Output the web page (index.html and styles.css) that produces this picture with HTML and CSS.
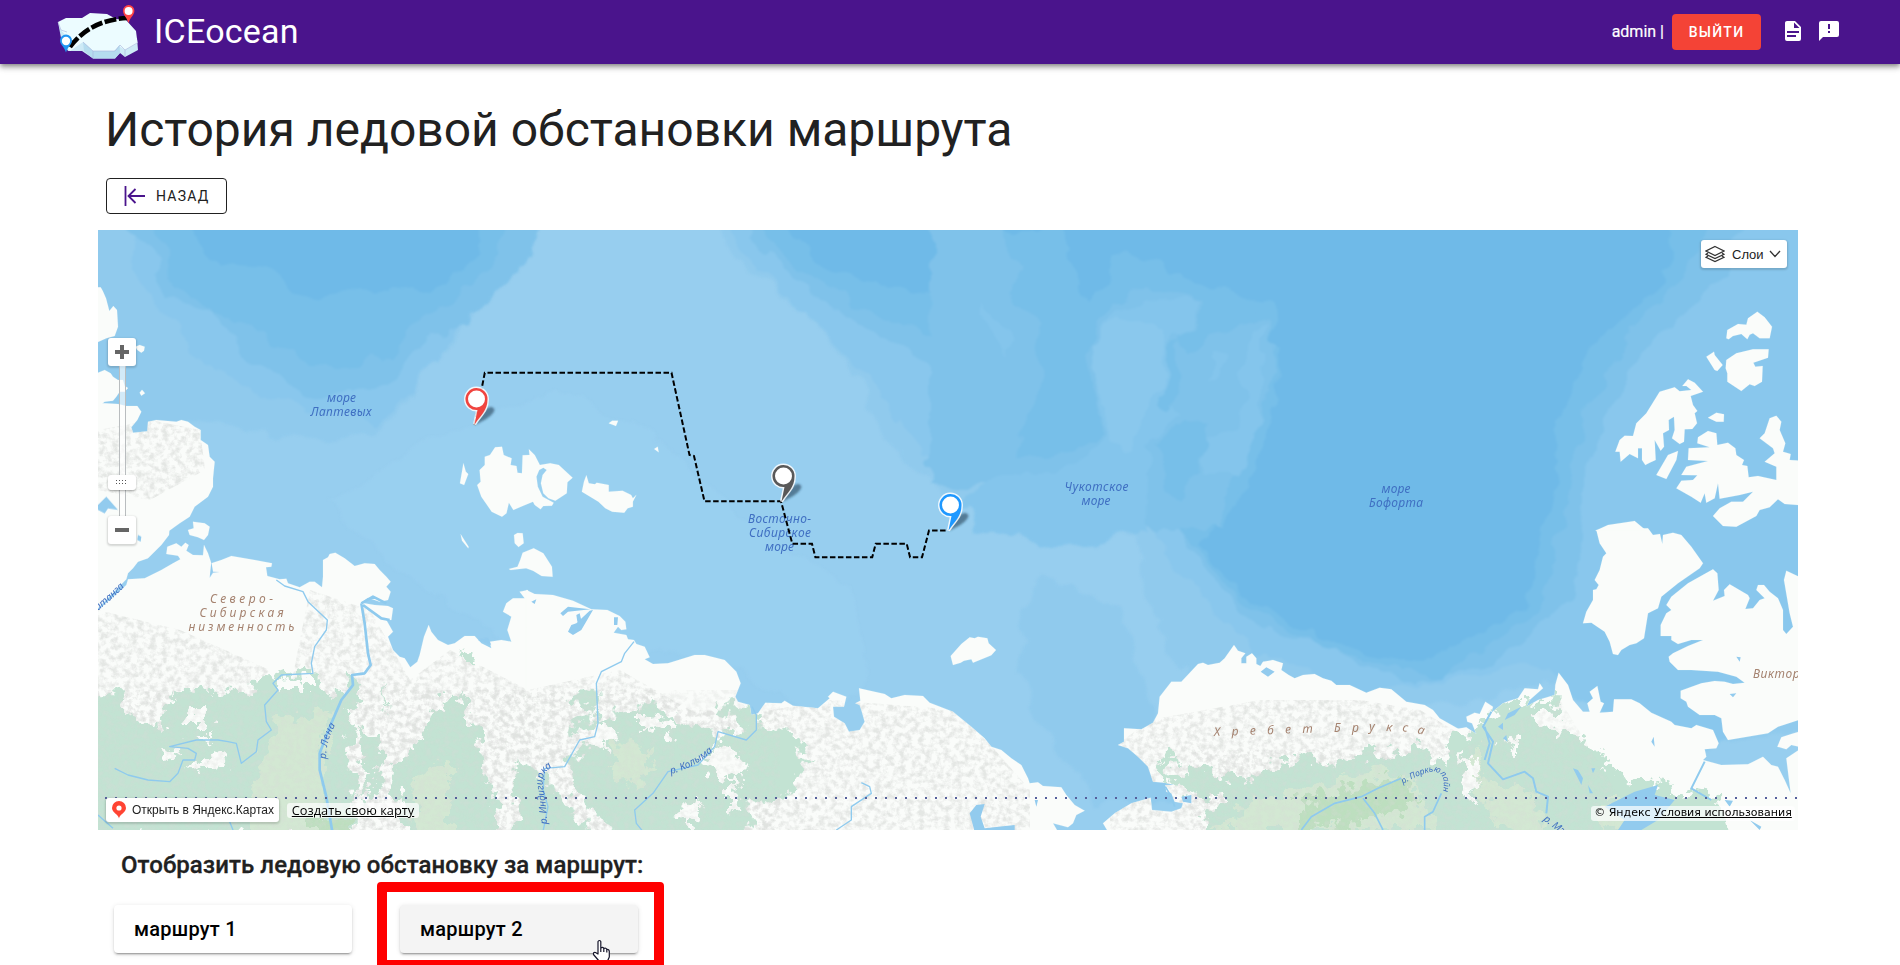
FILE: index.html
```html
<!DOCTYPE html>
<html lang="ru">
<head>
<meta charset="utf-8">
<title>ICEocean</title>
<link rel="stylesheet" href="styles.css">
</head>
<body>
<header class="bar">
  <svg class="logo" width="82" height="58" viewBox="57 3 82 58">
    <path fill="#cdeaf6" d="M58 22 61 38 68 51 82 51 93 58.500 115 58.500 120 53 125 57 138 50 137 38z"/>
    <path fill="#ecfcff" d="M58 22 66 18 82 18 90 13 107 14 116 19 126 20 136 31 137.500 43 125 50 119 46 114 51 93 51 83 42 70 51 64 45 66 36 61 30z"/>
    <path fill="#b5dcef" d="M83 42 93 51 93 58.500 84 51zM93 51H115V58.500H93zM115 51 119.500 45 120 53 115 58.500z"/>
    <path fill="none" stroke="#aab4dc" stroke-width=".6" d="M58 22 61 30 67 32M83 42 93 51H115L120 45 125 50 137 43M93 51V58M125 50V57"/>
    <path fill="none" stroke="#000" stroke-width="4.600" stroke-dasharray="12 2.500" d="M70 47Q90 20 127 18"/>
    <path fill="#2196f3" d="M66 52.500C64 46 60 45 60 40.500a6 6 0 0 1 12 0C72 45 68 46 66 52.500z"/><circle cx="66" cy="41" r="4.200" fill="#fff"/>
    <path fill="#f44" d="M128.500 23C126.500 17 123 15 123 10.800a5.700 5.700 0 0 1 11.400 0C134.400 15 130.500 17 128.500 23z"/><circle cx="128.600" cy="11" r="4" fill="#fff"/>
  </svg>
  <span class="brand">ICEocean</span>
  <span class="user">admin |</span>
  <button class="exit">выйти</button>
  <svg class="ico doc" width="24" height="24" viewBox="0 0 24 24"><path fill="#fff" d="M13 9h5.500L13 3.500V9M6 2h8l6 6v12a2 2 0 0 1-2 2H6a2 2 0 0 1-2-2V4c0-1.110.890-2 2-2m9 16v-2H6v2h9m3-4v-2H6v2h12z"/></svg>
  <svg class="ico" width="24" height="24" viewBox="0 0 24 24"><path fill="#fff" d="M13 10h-2V5h2m0 9h-2v-2h2m7-10H4a2 2 0 0 0-2 2v18l4-4h14a2 2 0 0 0 2-2V4a2 2 0 0 0-2-2z"/></svg>
</header>
<main class="page">
  <h1 class="title">История ледовой обстановки маршрута</h1>
  <button class="back">
    <svg width="22" height="20" viewBox="0 0 22 20" fill="none" stroke="#4a148c" stroke-width="1.800"><path d="M1.500 0V20M21 10H4.500M11.500 3 4.500 10 11.500 17"/></svg>
    <span>назад</span>
  </button>
  <section class="map">
    <svg class="chart" width="1700" height="600" viewBox="98 230 1700 600">
      <defs>
        <filter id="soft" x="-5%" y="-5%" width="110%" height="110%" color-interpolation-filters="sRGB"><feTurbulence type="fractalNoise" baseFrequency=".03" numOctaves="3" seed="4"/><feDisplacementMap in="SourceGraphic" scale="26" xChannelSelector="R" yChannelSelector="G" result="d"/><feGaussianBlur in="d" stdDeviation="1"/></filter>
        <filter id="rough" filterUnits="userSpaceOnUse" x="90" y="500" width="1720" height="350" color-interpolation-filters="sRGB"><feTurbulence type="fractalNoise" baseFrequency=".08" numOctaves="4" seed="9"/><feDisplacementMap in="SourceGraphic" scale="30" xChannelSelector="R" yChannelSelector="G"/></filter>
        <filter id="relief" filterUnits="userSpaceOnUse" x="90" y="220" width="1720" height="630" color-interpolation-filters="sRGB"><feTurbulence type="fractalNoise" baseFrequency=".16 .18" numOctaves="4" seed="3"/><feColorMatrix values="0 0 0 0 .84  0 0 0 0 .85  0 0 0 0 .84  3 0 0 0 -1.200"/><feComposite in2="SourceAlpha" operator="in"/></filter>
        <filter id="blur"><feGaussianBlur stdDeviation="1.200"/></filter>
        <clipPath id="landclip"><use href="#s1"/><use href="#s2"/><use href="#s3"/><use href="#s4"/><use href="#s5"/></clipPath>
        <path id="s1" transform="translate(98 230) scale(.33333)" d="M-5 520 20 520 60 522 85 528 118 528 130 545 118 570 100 592 105 608 148 604 150 575 175 570 235 575 250 570 270 575 290 590 308 600 308 630 330 645 335 680 350 695 345 745 345 770 330 800 290 830 275 860 245 880 214 902 213 915 190 945 150 985 120 995 105 1015 90 1030 85 1048 -5 1140Z"/>
        <path id="s2" transform="translate(98 530) scale(.33333)" d="M-5 245 85 165 90 148 140 145 190 120 225 100 247 88 240 77 205 72 208 50 235 40 250 50 262 38 272 45 265 62 285 75 315 76 318 45 330 70 340 100 370 90 400 78 470 90 522 100 520 110 504 112 508 138 545 148 565 146 570 160 605 172 635 155 650 155 672 172 675 140 675 90 690 82 695 72 712 68 740 85 770 108 800 100 830 102 845 120 865 140 878 155 865 170 878 185 870 210 845 215 810 203 790 218 830 225 870 228 885 235 880 270 865 270 885 305 870 320 885 360 905 380 920 385 937 412 958 395 965 375 978 320 992 285 1000 305 1020 330 1050 345 1070 340 1100 318 1130 318 1150 340 1180 355 1175 335 1210 330 1240 335 1228 300 1240 260 1215 245 1225 220 1245 205 1280 205 1265 185 1290 180V905H-5Z"/>
        <path id="s3" transform="translate(528 530) scale(.33333)" d="M-5 180 20 192 75 195 135 212 190 238 238 240 275 258 292 275 295 298 280 300 270 290 257 308 295 315 300 328 318 330 325 342 350 350 365 382 350 388 375 402 420 400 500 375 530 375 590 390 625 425 638 460 622 500 630 515 665 525 670 555 690 550 712 518 760 520 770 512 795 527 870 535 905 505 900 500 915 485 955 500 948 530 915 530 918 560 950 580 963 605 995 600 1010 575 1000 540 995 525 982 520 997 512 993 475 1070 492 1090 505 1130 495 1185 498 1205 518 1275 545 1330 590 1370 625 1390 650 1420 660 1450 685 1480 705 1500 745 1505 760 1530 757 1545 768 1600 772 1615 795 1640 825 1670 842 1645 855 1635 880 1620 892 1575 880 1590 905H-5Z"/>
        <path id="s4" transform="translate(1028 530) scale(.33333)" d="M225 880 260 850 310 820 368 803 372 840 430 845 460 835 465 820 440 815 430 790 415 785 412 765 440 765 410 758 375 755 360 710 330 680 300 655 270 645 288 635 288 595 340 598 375 578 390 550 395 500 430 455 460 455 510 402 525 398 540 405 575 398 590 385 618 345 630 362 652 370 640 385 640 400 655 400 655 380 672 370 685 385 685 402 697 408 705 395 735 390 765 400 760 420 782 435 800 445 825 435 860 432 885 445 910 452 925 465 965 465 1015 488 1055 473 1090 478 1135 515 1190 525 1215 540 1235 565 1292 597V905H240Z"/>
        <path id="s5" transform="translate(1458 530) scale(.33333)" d="M-5 597 25 592 55 612 42 580 28 575 25 560 50 548 65 552 82 515 105 530 100 548 135 520 155 512 180 505 200 475 240 478 245 460 255 475 215 510 205 530 240 510 290 495 292 465 302 428 330 465 345 510 375 545 395 545 388 520 405 505 395 485 418 468 428 515 438 520 425 548 465 545 468 508 520 508 545 520 580 548 640 575 650 585 700 595 715 585 765 600 782 640 775 655 740 658 745 680 735 690 790 705 870 703 915 680 940 705 960 710 980 750 998 790 985 685 1022 660V905H-5Z"/>
      </defs>
      <rect x="98" y="230" width="1700" height="600" fill="#97ceef"/>
      <g filter="url(#soft)">
        <g transform="translate(98 230) scale(1.0909 .3827)">
          <path fill="#90caed" d="M-20-60H420L370 100 310 330 260 520 220 560 100 500-20 560ZM540-60 640 200 700 400 720 560 800 740 950 800 980 1100 1040 1250 1250 1240 1340 1180 1500 1350 1580 1300V-60ZM860 900 840 1150 910 1500 990 1500 940 1000Z"/>
          <path fill="#89c7ed" d="M40-60H400L350 100 310 330 260 500 160 450 80 320 30 100ZM560-60 650 230 720 430 760 600 830 690 960 750 985 880 1060 1090 1160 1210 1310 1130 1400 1300 1480 1350 1580 1200V-60Z"/>
          <path fill="#7fc2ea" d="M580-60 650 160 710 260 770 360 790 500 850 610 980 650 1000 830 1060 1030 1200 1180 1280 1130 1350 970 1370 600 1410 330 1490 130 1510-60Z"/>
          <path fill="#77bfe9" d="M590-60 650 130 720 240 800 300 830 500 850 600 960 640 1005 820 1050 970 1120 1100 1230 1160 1320 1000 1345 750 1360 500 1400 280 1450 130 1490-60Z"/>
          <path fill="#6fbae8" d="M620-60 660 100 760 170 870 230 900 250 940 100 1010 130 1075 190 1080 430 1060 650 1010 820 1050 950 1130 1090 1220 1130 1310 980 1330 730 1340 500 1380 280 1440 130 1440-60Z"/>
        </g>
        <g transform="translate(98 230) scale(.33333)">
          <path fill="#7fc2ea" d="M60-30 180 100 200 200 330 245 410 320 440 370 520 430 640 490 780 490 850 450 920 410 1000 310 1100 290 1200 180 1290 100 1330-30Z"/>
          <path fill="#77bfe9" d="M160-40 230 150 330 240 450 280 560 340 630 400 720 415 790 410 820 380 880 390 950 290 1050 240 1110 160 1180 110 1240-40Z"/>
          <path fill="#6fbae8" d="M260-30 330 90 400 100 500 108 600 185 650 218 700 190 760 165 900 190 1000 180 1130 90 1150-30Z"/>
        </g>
        <g transform="translate(980 230) scale(.33333)">
          <path fill="#77bfe9" d="M-100 0H250L260 80 340 200 380 180 400 90 460 60 540 100 590 175 715 160 680 220 690 290 830 240 895 350 890 440 850 560 780 780 720 900 560 900 280 720-100 640Z"/>
          <path fill="#7fc2ea" d="M-150-30 60-30 120 100 80 200 180 290 200 440 150 540 110 690 280 660 380 620 350 520 300 380 360 270 430 210 520 170 665 215 650 290 600 300 640 390 690 340 760 290 850 270 885 330 880 440 840 560 760 760 710 900 520 900 400 800-150 760Z"/>
          <path fill="#84c5ec" d="M330 340 420 240 520 205 660 215 640 290 580 300 550 500 600 550 500 660 500 900 300 950-30 900-60 810 60 750 280 700 390 620 350 500ZM830 300 850 280 850 450 830 600 780 740 660 740 670 630 760 600 810 500 780 420ZM0 220 60 260 110 330 70 380 40 330ZM690 390 740 370 715 450 690 460Z"/>
          <path fill="#8ac8ed" d="M325 340 420 265 540 300 560 350 540 480 480 570 460 660 400 640 380 540 340 460Z"/>
          <path fill="#77bfe9" d="M575 360 605 310 600 460 560 545 535 540ZM530 640 620 560 680 580 660 700 620 800 570 780Z"/>
        </g>
        <path fill="#9bd1f1" opacity=".5" d="M450 430 560 390 650 430 690 470 740 520 850 590 870 680 820 720 720 660 500 640 380 560 330 500Z"/>
      </g>
      <g fill="#fafcfa" stroke="#fafcfa" stroke-width=".5">
        <use href="#s1"/><use href="#s2"/><use href="#s3"/><use href="#s4"/><use href="#s5"/>
        <g id="isles">
          <path transform="translate(98 230) scale(.33333)" d="M-5 172 8 172 14 182 24 205 34 243 46 228 57 240 60 290 50 318 25 325-5 338ZM112 350 125 345 140 350 138 362 130 368 118 360ZM-5 430 20 420 38 430 45 440 60 450 75 450 80 468 90 474 80 485 65 485 55 500 45 512 20 515-5 535ZM125 488 132 479 141 490 130 497ZM285 875 320 880 335 890 330 915 318 930 300 922 275 915 270 900 287 895Z"/>
          <path transform="translate(440 350) scale(.3444 .33333)" d="M130 320 145 315 160 292 180 290 185 315 208 325 205 345 222 348 225 368 238 370 240 316 260 315 258 298 275 315 290 345 320 340 345 345 385 383 370 397 368 430 335 452 315 445 300 430 293 400 298 375 310 360 300 353 288 360 280 380 284 410 298 440 330 458 325 467 300 468 292 478 275 465 270 455 240 468 213 480 200 458 193 490 180 500 150 485 120 440 108 405 118 395 115 360 130 345ZM68 340 75 365 82 372 70 405 58 400ZM412 425 418 395 425 376 432 400 450 403 455 398 490 405 490 425 530 422 555 435 560 445 570 435 560 455 560 470 545 475 535 488 500 485 480 475 460 455ZM490 220 500 212 517 212 511 228ZM622 297 632 290 635 307ZM215 555 225 549 240 550 243 580 228 591 217 580ZM200 657 225 650 233 630 240 608 272 595 300 610 325 650 327 680 295 678 270 662 250 655 205 660ZM60 553 83 590 82 595 64 572Z"/>
          <path transform="translate(528 530) scale(.33333)" d="M1268 378 1300 342 1325 322 1340 325 1350 320 1378 325 1382 340 1404 360 1390 376 1335 398 1330 388 1308 392 1298 398 1275 405Z"/>
          <path transform="translate(1458 530) scale(.33333)" d="M415 0 425 40 445 70 435 80 425 120 410 150 422 165 415 178 405 180 405 210 385 245 375 280 400 278 440 305 455 335 465 372 480 375 490 360 515 345 535 340 558 325 570 250 600 235 610 200 660 160 725 115 735 100 700 50 670 15 645 8 615 15 613 42 606 12 585 15 570-5ZM765 118 778 130 782 180 765 212 800 198 798 180 815 163 870 195 875 205 862 237 885 235 905 210 920 205 895 180 900 165 918 165 935 185 960 205 975 240 975 300 985 312 1005 290 995 250 978 150 985 122 1022 140V570L960 590 930 610 810 630 795 605 790 565 770 555 725 555 690 530 685 515 668 505 668 482 730 460 770 453 800 455 825 462 860 458 835 440 780 425 700 420 660 420 635 395 632 380 645 370 690 348 735 330 700 330 660 342 640 330 640 318 608 318 608 285 625 250 640 240 625 225 640 200 690 160ZM1022 605 1000 612 970 622 958 650 985 658 1000 645 1022 650Z"/>
          <path transform="translate(1458 230) scale(.33333)" d="M805 325 808 300 840 282 865 284 870 265 898 245 920 262 942 290 935 325 905 325 885 310 875 314 868 328 850 312 825 318 812 328ZM745 380 768 365 770 375 794 405 778 423 770 420ZM805 390 835 370 885 358 932 358 930 383 886 398 892 410 914 408 912 455 890 468 875 463 850 483 808 455 808 430 803 415ZM472 665 485 630 500 617 525 618 535 580 565 550 605 485 650 472 665 484 700 480 685 468 673 468 690 448 710 458 735 485 698 498 705 525 718 543 710 550 717 580 703 597 680 598 678 635 665 642 642 625 650 600 648 560 632 570 633 600 615 610 618 650 608 662 590 630 593 690 575 698 562 705 552 690 552 655 540 655 540 685 515 672 488 695 485 665ZM595 735 630 675 660 663 655 690 625 747ZM750 563 775 548 798 553 797 575 775 575ZM655 775 670 752 705 750 718 736 670 735 685 710 750 693 690 690 692 655 755 652 718 640 720 622 750 603 775 610 778 645 810 638 832 655 835 675 858 690 852 705 868 708 872 742 900 738 955 750 955 710 920 695 950 670 945 655 905 625 920 610 935 565 955 557 970 575 965 600 982 640 975 665 998 672 995 690 1022 692V825L980 822 960 808 935 832 905 840 895 858 835 890 795 888 765 858 785 835 820 815 855 815 885 785 845 795 785 806 780 760 770 805 745 818 740 790 728 818 700 800ZM412 902 450 885 530 873 565 902Z"/>
        </g>
      </g>
      <g clip-path="url(#landclip)">
        <g filter="url(#relief)" opacity=".6">
          <path d="M98 430 150 420 200 430 205 470 150 500 98 490ZM98 610 180 630 270 670 250 690 98 690ZM310 590 370 610 410 680 450 650 528 690 620 670 690 710 760 712 830 700 960 710 1030 790V830H98V690L290 690ZM1110 750 1150 720 1260 700 1360 700 1420 710 1470 740V830H1110ZM1470 730 1500 830H1458V740Z"/>
        </g>
        <g filter="url(#rough)">
          <g fill="#c3e3d3">
            <path transform="translate(98 530) scale(.33333)" d="M-40 490 60 490 80 560 180 590 230 500 300 460 340 485 460 485 490 450 540 430 650 410 650 460 680 485 740 485 745 425 780 450 790 510 750 540 770 600 740 680 770 720 770 900-40 940ZM880 720 920 690 970 620 1020 530 1080 485 1120 560 1150 640 1160 740 1200 810 1180 930 930 930 900 800ZM1090 360 1130 370 1125 410ZM790 590 850 640 850 720 830 790 780 820 830 720 780 690ZM860 430 860 520 880 550 850 520Z"/>
            <path transform="translate(528 530) scale(.33333)" d="M110 500 210 490 210 560 280 550 380 520 460 580 500 590 560 610 640 610 690 580 750 600 810 620 820 680 870 690 820 710 810 760 730 830 650 800 680 940 300 940 160 820 110 700 210 620 210 580 120 620 110 590 210 560ZM580 520 660 525 690 550 670 600 640 570 590 570ZM-40 700 60 740 90 800 190 900 180 940-40 940Z"/>
            <path transform="translate(1028 530) scale(.33333)" d="M400 690 430 670 460 690 415 700 420 740 520 720 640 750 700 720 850 680 880 710 920 690 1000 680 1020 640 1060 680 1150 650 1200 660 1220 690 1340 700V940H510L530 850 600 830 590 790 490 800 440 760 390 740Z"/>
            <path transform="translate(1458 530) scale(.33333)" d="M-40 690-20 620 60 600 80 560 180 510 320 515 320 545 230 550 250 600 370 610 430 670 480 740 630 760 640 800 740 780 800 850 810 940H-40Z"/>
          </g>
          <path fill="#d3e8d3" d="M280 720 330 710 325 760 320 840 250 840 250 790ZM410 780 450 760 450 840 420 840ZM610 740 650 750 640 790 620 780ZM1210 830 1260 800 1380 770 1410 780 1440 830ZM1480 740 1480 780 1530 790 1550 840 1500 830 1470 770ZM1600 800 1630 800 1630 830 1600 830Z"/>
          <path fill="#bddfbf" d="M1300 800 1360 785 1400 775 1420 800 1380 820 1300 830ZM310 815 350 815 350 840 310 840Z"/>
          <path fill="#fafcfa" d="M190 710 205 710 210 725 185 725ZM190 735 215 735 195 745ZM160 745 180 750 170 765ZM185 770 225 750 230 760 205 775ZM285 675 310 678 310 690 280 690ZM640 715 680 725 670 735 640 725ZM590 740 600 720 620 740 605 750ZM700 760 725 740 750 770 720 780ZM675 810 700 800 690 830ZM730 770 740 800 730 820ZM1505 740 1515 735 1515 755ZM1462 750 1478 765 1475 810 1465 790Z"/>
        </g>
        <path filter="url(#relief)" opacity=".3" d="M98 690H780L780 830H98ZM1190 750H1460L1560 700 1640 830H1190Z"/>
      </g>
      <g fill="#92cbee">
        <path transform="translate(98 530) scale(.33333)" d="M340 95 345 125 365 125 345 128 335 143ZM1140 330 1170 322 1180 345ZM0-75 25-100 60-60 30-65 20-50 0-60ZM120 15 130 20 128 35 118 30Z"/>
        <path transform="translate(528 530) scale(.33333)" d="M97 250 120 230 187 238 120 245 105 258ZM185 242 195 240 160 300 135 315 120 305 130 285 145 280ZM145 255 155 250 162 280 148 275ZM258 262 270 262 268 285 258 285ZM10 215 25 208 20 222ZM1325 850 1345 825 1370 822 1358 860 1370 895 1460 885 1460 905H1340Z"/>
        <path transform="translate(1028 530) scale(.33333)" d="M698 425 715 412 740 425 720 440ZM460 800 490 795 490 820 465 815ZM20 810 30 810 25 830Z"/>
        <path transform="translate(1458 530) scale(.33333)" d="M120 590 135 578 135 600ZM150 550 190 530 170 555 140 570ZM345 715 360 720 375 745 370 765ZM400 715 412 715 405 730ZM390 765 405 790 395 790ZM580 635 587 620 590 650ZM440 830 530 785 600 765 590 795 650 810 600 870 550 900H480L500 870ZM815 492 835 490 825 502ZM835 380 848 382 845 395ZM135 625 145 615 148 635ZM800 810 825 812 815 830ZM875 870 910 890 905 900Z"/>
      </g>
      <g fill="none" stroke="#8ecaee" stroke-width="4" stroke-linejoin="round">
        <path transform="translate(98 530) scale(.33333)" d="M535 150 560 168 615 185 630 215 688 270 685 300 650 350 640 400 645 430 550 435 525 460 540 480 500 525 505 575 520 600 480 630 475 665 430 700 415 640 390 635 360 630 295 630 215 650 270 655 295 670 290 690 255 690 240 730 215 755 150 750 90 735 50 715M0 855 45 895M395 875 405 900"/>
        <path stroke-width="8" transform="translate(98 530) scale(.33333)" d="M790 220 800 280 810 370 818 405 800 430 762 435 765 465 730 510 700 580 665 670 665 720 685 800 703 905M790 220 825 200 865 220M795 225 850 265 875 270"/>
        <path transform="translate(528 530) scale(.33333)" d="M318 335 290 370 280 395 220 425 205 460 210 580 200 620 155 630 110 710 50 715 45 780 60 830 45 905M672 530 685 555 685 600 655 630 570 605 560 650 510 705 420 725 375 790 320 840 325 880 345 905M1000 758 1025 770 1030 790 970 830 970 870 925 900"/>
        <path stroke-width="5" transform="translate(1028 530) scale(.33333)" d="M820 900 850 860 920 820 1000 800 1050 775 1120 745M1005 805 1040 850 1065 900M1240 790 1215 845 1190 860 1190 900M412 770 430 800 440 830"/>
        <path stroke-width="6" transform="translate(1458 530) scale(.33333)" d="M100 545 75 590 105 635 90 700 135 748 200 725 225 745 235 785 270 800 265 850M80 590 95 640 80 690M740 695 715 745 700 775 760 810"/>
      </g>
      <path fill="none" stroke="#565f9c" stroke-width="2" stroke-dasharray="2 8" d="M105 798H1798"/>
      <g class="sea" text-anchor="middle">
        <text x="341.500" y="401.500" textLength="29">море</text><text x="341" y="415.500" textLength="61">Лаптевых</text>
        <text x="779.500" y="522.500" textLength="63">Восточно-</text><text x="780" y="536.500" textLength="62">Сибирское</text><text x="779.500" y="550.500" textLength="29">море</text>
        <text x="1096.500" y="491" textLength="64">Чукотское</text><text x="1096" y="505" textLength="29">море</text>
        <text x="1396" y="493" textLength="29">море</text><text x="1396" y="507" textLength="54">Бофорта</text>
      </g>
      <g class="ridge">
        <text x="210" y="603" textLength="63">Северо-</text><text x="199.500" y="617" textLength="84">Сибирская</text><text x="188.500" y="631" textLength="106">низменность</text>
        <text x="1214" y="736" textLength="99" transform="rotate(-2 1214 736)">Хребет</text>
        <text y="732 732 731 731 731 733" x="1334 1352 1369 1386 1402 1417" rotate="0 0 0 5 10 15">Брукса</text>
        <text x="1753" y="678" textLength="54">Виктори</text>
      </g>
      <g class="river">
        <path id="r1" fill="none" d="M94 614Q112 600 130 581"/><text><textPath href="#r1">Хатанга</textPath></text>
        <path id="r2" fill="none" d="M326 759Q326 740 336 724"/><text><textPath href="#r2" textLength="36">р. Лена</textPath></text>
        <path id="r3" fill="none" d="M547 824Q546 800 543 785Q540 770 562 762"/><text><textPath href="#r3">р. Индигирка</textPath></text>
        <path id="r4" fill="none" d="M671 774Q695 768 718 747"/><text><textPath href="#r4">р. Колыма</textPath></text>
        <path id="r5" fill="none" d="M1403 784Q1424 771 1436 772Q1450 776 1439 806"/><text class="small"><textPath href="#r5">р. Поркьюпайн</textPath></text>
        <path id="r6" fill="none" d="M1543 820 1572 842"/><text><textPath href="#r6">р. Мэк</textPath></text>
      </g>
      <path fill="none" stroke="#000" stroke-width="2" stroke-dasharray="5.500 2.500" d="M474.500 425 484.800 372.700H671.500L689.500 455 694 456 704.500 501.300H781L792.300 543.700H812L815.400 557.300H872.200L875.700 543.700H906.700L910.100 557.300H922L929 530.500H948"/>
      <g id="pins">
        <g transform="translate(474.500 425)" fill="#f0443f"><path filter="url(#blur)" fill="#28465a" fill-opacity=".6" d="M0 0 10-15Q18-21 20-15Q18-8 0 0z"/><path stroke="#fff" stroke-opacity=".85" stroke-width="3" d="M0-.5 3-15A11 11 0 1 1 13-26C13-14 6-10 0-.5z"/><path d="M0-.5 3-15A11 11 0 1 1 13-26C13-14 6-10 0-.5z"/><circle cx="2" cy="-26" r="8.500" fill="#fff"/></g>
        <g transform="translate(781.500 502)" fill="#595959"><path filter="url(#blur)" fill="#28465a" fill-opacity=".6" d="M0 0 10-15Q18-21 20-15Q18-8 0 0z"/><path stroke="#fff" stroke-opacity=".85" stroke-width="3" d="M0-.5 3-15A11 11 0 1 1 13-26C13-14 6-10 0-.5z"/><path d="M0-.5 3-15A11 11 0 1 1 13-26C13-14 6-10 0-.5z"/><circle cx="2" cy="-26" r="8.500" fill="#fff"/></g>
        <g transform="translate(948.500 531)" fill="#1e98ff"><path filter="url(#blur)" fill="#28465a" fill-opacity=".6" d="M0 0 10-15Q18-21 20-15Q18-8 0 0z"/><path stroke="#fff" stroke-opacity=".85" stroke-width="3" d="M0-.5 3-15A11 11 0 1 1 13-26C13-14 6-10 0-.5z"/><path d="M0-.5 3-15A11 11 0 1 1 13-26C13-14 6-10 0-.5z"/><circle cx="2" cy="-26" r="8.500" fill="#fff"/></g>
      </g>
    </svg>
    <div class="zoom">
      <button class="zbtn"><svg width="14" height="14"><path fill="#666" d="M5 0h4v5h5v4H9v5H5V9H0V5h5z"/></svg></button>
      <div class="rail"><div class="runner"><svg width="12" height="5" fill="#555"><path d="M0 0h1v1H0zM3 0h1v1H3zM6 0h1v1H6zM9 0h1v1H9zM0 3h1v1H0zM3 3h1v1H3zM6 3h1v1H6zM9 3h1v1H9z"/></svg></div></div>
      <button class="zbtn"><svg width="14" height="14"><path fill="#666" d="M0 5h14v4H0z"/></svg></button>
    </div>
    <button class="layers">
      <svg width="20" height="18" viewBox="0 0 20 18" fill="none" stroke="#333" stroke-width="1.200"><path d="M10 1.500 19 6 10 10.500 1 6zM3 8 1 9.300 10 13.500 19 9.300 17 8M3 11 1 12.300 10 16.500 19 12.300 17 11"/></svg>
      <span>Слои</span>
      <svg width="12" height="8" viewBox="0 0 12 8" fill="none" stroke="#333" stroke-width="1.300"><path d="M1 1 6 6.500 11 1"/></svg>
    </button>
    <div class="open">
      <svg width="14" height="18" viewBox="0 0 14 18"><path fill="#f43" d="M7 17.500C6.500 13.500 0 11.500 0 7a7 7 0 0 1 14 0C14 11.500 7.500 13.500 7 17.500z"/><circle cx="7" cy="7" r="2.600" fill="#fff"/></svg>
      <span>Открыть в Яндекс.Картах</span>
    </div>
    <a class="create">Создать свою карту</a>
    <div class="copy">© Яндекс <a>Условия использования</a></div>
  </section>
  <h2 class="sub">Отобразить ледовую обстановку за маршрут:</h2>
  <div class="routes">
    <div class="card">маршрут 1</div>
    <div class="card hover">маршрут 2
      <svg class="cursor" width="19" height="26" viewBox="0 0 19 26"><path fill="#fff" stroke="#15152a" stroke-width="1.200" stroke-linejoin="round" d="M6 15V2.500Q7.500.5 8.800 2.500V9Q11 7.500 11.800 9.500 14 8.500 14.800 10.500 17 10 17.300 12.500V18L15.500 22V25H7V22L1.500 15.500Q1 13 3.500 13.500zM8.800 9V13M11.800 9.500V13M14.800 10.500V13.500"/></svg>
      <div class="frame"></div>
    </div>
  </div>
</main>
</body>
</html>
```
FILE: styles.css
```css
* { box-sizing: border-box; }
body { margin: 0; height: 965px; overflow: hidden; background: #fff; color: #212121; font-family: Roboto, "Liberation Sans", sans-serif; }
button { font: inherit; border: 0; padding: 0; }
svg { display: block; }
.bar { position: relative; display: flex; align-items: center; height: 64px; padding: 0 59px 0 57px; background: #4a148c; color: #fff; box-shadow: 0 2px 4px -1px rgba(0,0,0,.3), 0 4px 5px rgba(0,0,0,.2), 0 1px 10px rgba(0,0,0,.14); }
.brand { margin-left: 15px; font-size: 34px; line-height: 60px; letter-spacing: .25px; flex: 1; padding-bottom: 2px; }
.user { font-size: 16px; margin-right: 8px; padding-bottom: 1px; -webkit-text-stroke: .2px #fff; }
.exit { width: 89px; height: 36px; border-radius: 4px; background: #f44336; color: #fff; font-size: 14px; font-weight: 500; letter-spacing: 1.25px; text-transform: uppercase; margin-right: 20px; }
.ico { margin-top: -2px; }
.doc { margin-right: 12px; }
.page { padding: 34px 102px 0 98px; }
.title { margin: 0; padding-left: 7px; font-size: 48px; font-weight: 400; line-height: 64px; }
.back { display: flex; align-items: center; gap: 10px; width: 121px; height: 36px; margin: 16px 0 16px 8px; padding-left: 17px; border: 1px solid #212121; border-radius: 4px; background: #fff; color: #212121; font-size: 14px; letter-spacing: 1.25px; text-transform: uppercase; }
.map { position: relative; width: 1700px; height: 600px; overflow: hidden; color: #000; }
.sea { font: italic 12px "Noto Sans", sans-serif; fill: #3f6fc2; }
.ridge { font: italic 12px "Noto Sans", sans-serif; fill: #a58370; }
.river { font: italic 10px "Noto Sans", sans-serif; fill: #3f6fc2; }
.small { font-size: 8.5px; }
.zoom { position: absolute; left: 10px; top: 108px; display: flex; flex-direction: column; align-items: center; width: 28px; }
.zbtn { display: flex; align-items: center; justify-content: center; width: 28px; height: 28px; border-radius: 3px; background: #fff; box-shadow: 0 1px 2px 1px rgba(0,0,0,.15); }
.rail { width: 7px; height: 150px; padding-top: 109px; border: solid #b9bdbf; border-width: 0 1px; background: rgba(255,255,255,.6); }
.runner { display: flex; align-items: center; justify-content: center; width: 28px; height: 15px; margin-left: -12px; border-radius: 3px; background: #fff; box-shadow: 0 1px 2px rgba(0,0,0,.3); }
.layers { position: absolute; right: 11px; top: 10px; display: flex; align-items: center; width: 86px; height: 28px; padding-left: 4px; border-radius: 3px; background: #fff; color: #222; box-shadow: 0 1px 2px 1px rgba(0,0,0,.15); font: 13px "Liberation Sans", sans-serif; }
.layers span { margin: 0 5px 0 7px; }
.open { position: absolute; left: 8px; top: 568px; display: flex; align-items: center; gap: 6px; width: 173px; height: 24px; padding-left: 6px; border-radius: 3px; background: #fff; color: #222; box-shadow: 0 1px 2px 1px rgba(0,0,0,.15); font: 12px "Liberation Sans", sans-serif; white-space: nowrap; }
.create, .copy { position: absolute; height: 15px; border-radius: 3px; background: rgba(255,255,255,.7); line-height: 14px; white-space: nowrap; text-align: center; }
.create { left: 189px; top: 573px; width: 132px; font-family: "Open Sans", sans-serif; font-size: 12.8px; text-decoration: underline; }
.copy { right: 3px; top: 576px; width: 204px; font-family: "DejaVu Sans", sans-serif; font-size: 11px; }
.copy a { text-decoration: underline; }
.sub { margin: 19px 0 0 23px; font-size: 24px; font-weight: 500; line-height: 32px; letter-spacing: .08px; -webkit-text-stroke: .3px #212121; }
.routes { display: flex; gap: 48px; margin: 24px 0 0 16px; }
.card { position: relative; width: 238px; height: 48px; padding-left: 20px; border-radius: 4px; background: #fff; color: #000; font-size: 20px; font-weight: 500; line-height: 48px; letter-spacing: .25px; box-shadow: 0 3px 1px -2px rgba(0,0,0,.2), 0 2px 2px rgba(0,0,0,.14), 0 1px 5px rgba(0,0,0,.12); }
.hover { background: #f4f4f4; }
.cursor { position: absolute; left: 192px; top: 34px; }
.frame { position: absolute; left: -23px; top: -23px; width: 287px; height: 88px; border: 10px solid #f00; border-radius: 4px; }
```
